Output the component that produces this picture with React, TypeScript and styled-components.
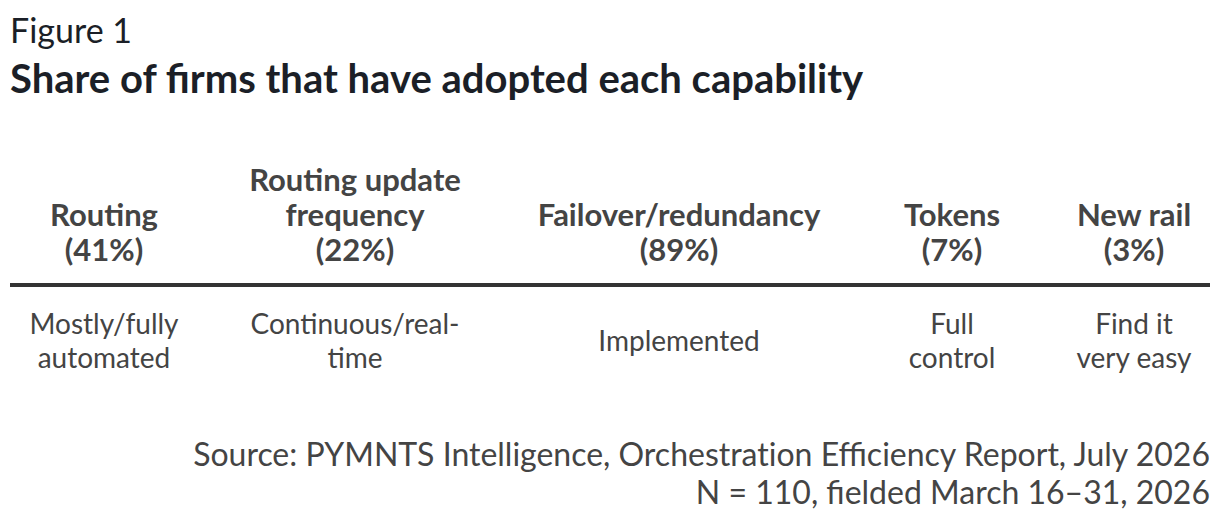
import React from 'react';
import styled, { createGlobalStyle } from 'styled-components';

const GlobalStyle = createGlobalStyle`
	html, body {
		margin: 0;
		padding: 0;
		background: #ffffff;
	}
	body {
		font-family: Lato, 'Noto Sans', sans-serif;
	}
`;

const Page = styled.main`
	width: 1220px;
	height: 524px;
	padding: 10px 10px 0 10px;
	box-sizing: border-box;
	display: flex;
	flex-direction: column;
`;

const Kicker = styled.div`
	font-size: 34px;
	line-height: 40px;
	color: #1b1f27;
`;

const Title = styled.h1`
	margin: 4px 0 0 0;
	font-size: 40px;
	line-height: 48px;
	font-weight: 700;
	color: #1b1f27;
`;

const Table = styled.div`
	margin-top: 60px;
	display: grid;
	grid-template-columns: 188px 314px 334px 212px 152px;
	color: #444444;
`;

const HeadCell = styled.div`
	display: flex;
	align-items: flex-end;
	justify-content: center;
	text-align: center;
	font-size: 31px;
	line-height: 35px;
	font-weight: 700;
	padding-bottom: 16px;
	border-bottom: 4px solid #333333;
`;

const BodyCell = styled.div`
	display: flex;
	align-items: center;
	justify-content: center;
	text-align: center;
	font-size: 28px;
	line-height: 34px;
	padding: 19px 0;
`;

const Source = styled.div`
	margin-top: 42px;
	text-align: right;
	font-size: 32px;
	line-height: 38px;
	color: #444444;
`;

const columns = [
	{ head: ['Routing', '(41%)'], body: ['Mostly/fully', 'automated'] },
	{ head: ['Routing update', 'frequency', '(22%)'], body: ['Continuous/real-', 'time'] },
	{ head: ['Failover/redundancy', '(89%)'], body: ['Implemented'] },
	{ head: ['Tokens', '(7%)'], body: ['Full', 'control'] },
	{ head: ['New rail', '(3%)'], body: ['Find it', 'very easy'] },
];

const Lines = ({ lines }: { lines: string[] }) => (
	<span>
		{lines.map((line, i) => (
			<React.Fragment key={i}>
				{i > 0 && <br />}
				{line}
			</React.Fragment>
		))}
	</span>
);

const App = () => {
	return (
		<Page>
			<GlobalStyle />
			<Kicker>Figure 1</Kicker>
			<Title>Share of firms that have adopted each capability</Title>
			<Table>
				{columns.map((col, i) => (
					<HeadCell key={'h' + i}>
						<Lines lines={col.head} />
					</HeadCell>
				))}
				{columns.map((col, i) => (
					<BodyCell key={'b' + i}>
						<Lines lines={col.body} />
					</BodyCell>
				))}
			</Table>
			<Source>
				{'Source: PYMNTS Intelligence, Orchestrat\u200Cion Efficiency Report, July 2026'}
				<br />
				N = 110, fielded March 16–31, 2026
			</Source>
		</Page>
	);
};

export default App;
